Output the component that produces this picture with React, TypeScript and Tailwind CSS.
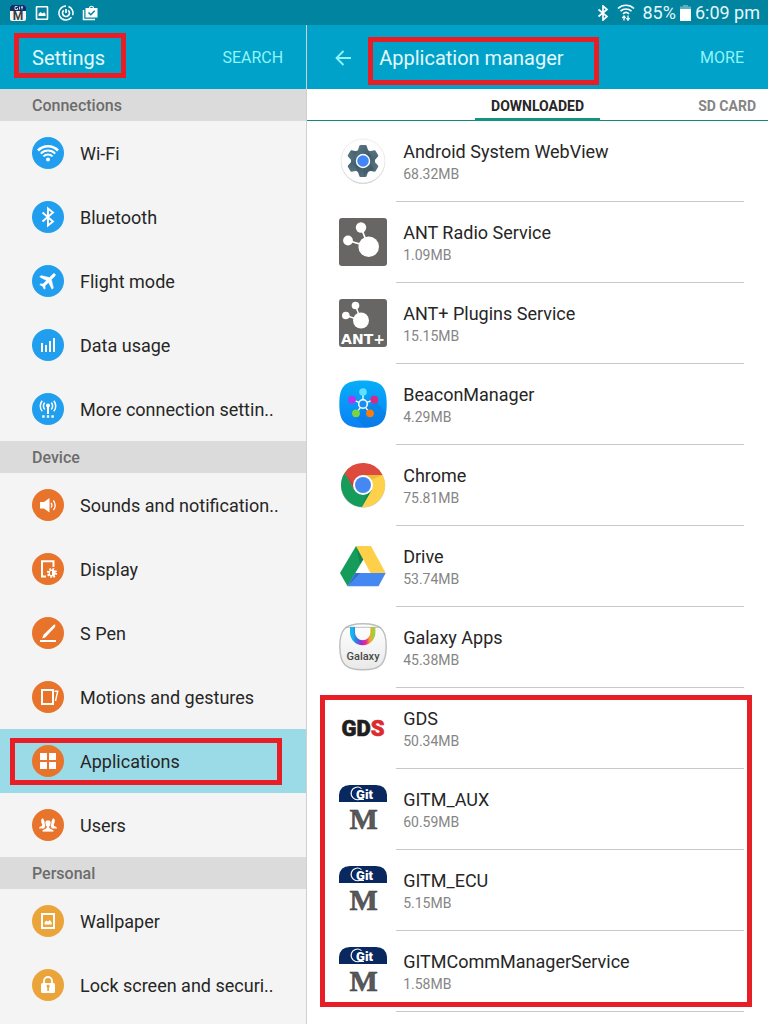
import type { ReactNode } from 'react'

const LOGO_FONT = 'Roboto, "Liberation Sans", sans-serif'

const CONNECTIONS = [
  {
    label: 'Wi-Fi',
    icon: (
      <g fill="none" stroke="#fff" strokeWidth="2">
        <path d="M6 13.5a14 14 0 0 1 20 0" strokeWidth="2.6" />
        <path d="M8.8 16.6a10.2 10.2 0 0 1 14.4 0" />
        <path d="M11.4 19.4a6.5 6.5 0 0 1 9.2 0" />
        <circle cx="16" cy="22.6" r="2" fill="#fff" stroke="none" />
      </g>
    ),
  },
  {
    label: 'Bluetooth',
    icon: <path d="M10.5 11.5 21 20.5 16 24.5V7.5L21 11.5 10.5 20.5" fill="none" stroke="#fff" strokeWidth="1.9" />,
  },
  {
    label: 'Flight mode',
    icon: (
      <path
        transform="translate(16.5 15.5) rotate(45) scale(.92) translate(-11.5 -12)"
        d="M21 16v-2l-8-5V3.5c0-.83-.67-1.5-1.5-1.5S10 2.67 10 3.5V9l-8 5v2l8-2.5V19l-2 1.5V22l3.5-1 3.5 1v-1.5L13 19v-5.500l8 2.500z"
        fill="#fff"
        stroke="#fff"
        strokeWidth=".5"
      />
    ),
  },
  {
    label: 'Data usage',
    icon: <path d="M10 14v9M14 16v7M18 12v11M22 9v14" fill="none" stroke="#fff" strokeWidth="2" />,
  },
  {
    label: 'More connection settin..',
    icon: (
      <g fill="none" stroke="#fff" strokeWidth="1.5">
        <path d="M16 13v8" strokeWidth="2" />
        <path d="M12.8 9.6a4.8 4.8 0 0 0 0 6.8M19.2 9.6a4.8 4.8 0 0 1 0 6.8M10.2 7.8a8 8 0 0 0 0 10.4M21.8 7.8a8 8 0 0 1 0 10.4" />
        <circle cx="16" cy="12.5" r="2" fill="#fff" stroke="none" />
        <path d="M10.2 23.5h2.4M14.8 23.5h2.4M19.4 23.5h2.4" strokeWidth="2.4" />
      </g>
    ),
  },
]

const DEVICE = [
  {
    label: 'Sounds and notification..',
    icon: (
      <>
        <path d="M8 13h4l5.5-4v14.5L12 19.5H8z" fill="#fff" />
        <path d="M19 14a3.5 3.5 0 0 1 0 4.5M21.3 11.5a7 7 0 0 1 0 9.5" fill="none" stroke="#fff" strokeWidth="1.3" />
      </>
    ),
  },
  {
    label: 'Display',
    icon: (
      <>
        <path d="M21.5 14V8.200H10v15.300h4" fill="none" stroke="#fff" strokeWidth="2" />
        <circle cx="20" cy="20" r="3.800" fill="none" stroke="#fff" strokeWidth="2.600" strokeDasharray="1.6 1.38" />
        <circle cx="20" cy="20" r="2.900" fill="none" stroke="#fff" strokeWidth="1.200" />
        <path d="M20 17.200a2.800 2.800 0 0 1 0 5.600z" fill="#fff" />
      </>
    ),
  },
  {
    label: 'S Pen',
    icon: (
      <>
        <path d="M10.200 21.600l1.300-3.900L21.800 7.700l1.500-.3-.2 2.600L13.200 20.400z" fill="#fff" />
        <path d="M8 24h16" stroke="#fff" strokeWidth="2" />
      </>
    ),
  },
  {
    label: 'Motions and gestures',
    icon: (
      <g fill="none" stroke="#fff">
        <rect x="10" y="9" width="11" height="14" strokeWidth="2" />
        <path d="M22.5 10.200h3.200L23.5 20" strokeWidth="1.400" />
      </g>
    ),
  },
  {
    label: 'Applications',
    active: true,
    icon: <path d="M8 8h7v7H8zM17 8h7v7h-7zM8 17h7v7H8zM17 17h7v7h-7z" fill="#fff" />,
  },
  {
    label: 'Users',
    icon: (
      <g fill="#fff">
        <path d="M11 9.300c-2.300.3-2.200 4-.9 5.800.3.900.1 1.700-.8 2.100-1.200.5-2.300.8-2.300 2.400h5.200l1.800-4z" />
        <path d="M21 9.300c2.300.3 2.200 4 .9 5.800-.3.900-.1 1.700.8 2.100 1.200.5 2.300.8 2.300 2.400h-5.200l-1.800-4z" />
        <path
          d="M16 11c-2.600 0-3.300 1.900-2.900 4 .2 1.200.7 2 1.300 2.600.2 1.300-.3 1.700-1.500 2.200-1.400.6-2.900 1-2.900 3.200h12c0-2.200-1.500-2.600-2.900-3.200-1.200-.5-1.700-.9-1.500-2.200.6-.6 1.100-1.400 1.300-2.600.4-2.100-.3-4-2.900-4z"
          stroke="#e8742c"
          strokeWidth=".8"
        />
      </g>
    ),
  },
]

const PERSONAL = [
  {
    label: 'Wallpaper',
    icon: (
      <>
        <rect x="10" y="9" width="12" height="14" fill="none" stroke="#fff" strokeWidth="2" />
        <path d="M12.500 19.500v-2l1.800-2 1.700 1.200 1.800-1.600 1.900 2.400v2z" fill="#fff" />
      </>
    ),
  },
  {
    label: 'Lock screen and securi..',
    icon: (
      <>
        <path d="M12 15v-3a4 4 0 0 1 8 0v3" fill="none" stroke="#fff" strokeWidth="1.800" />
        <rect x="9" y="14" width="14" height="10" rx="1.500" fill="#fff" />
        <path d="M14.500 17.500a1.600 1.600 0 1 1 2.400 1.200V22h-1.600v-3.300z" fill="#eaa43a" />
      </>
    ),
  },
]

const GROUPS: { title: string; color: string; items: { label: string; icon: ReactNode; active?: boolean }[] }[] = [
  { title: 'Connections', color: '#219fee', items: CONNECTIONS },
  { title: 'Device', color: '#e8742c', items: DEVICE },
  { title: 'Personal', color: '#eaa43a', items: PERSONAL },
]

function WebViewIcon() {
  return (
    <>
      <circle cx="24" cy="24.8" r="22" fill="#c4c4c4" />
      <circle cx="24" cy="24" r="22" fill="#fefefe" stroke="#e2e2e2" strokeWidth=".6" />
      <g fill="url(#gear)">
        <circle cx="24" cy="24" r="12" />
        {[0, 60, 120, 180, 240, 300].map((deg) => (
          <path key={deg} transform={`rotate(${deg} 24 24)`} d="M18.500 14.500 20.400 8.800q.3-.8 1.200-.8h4.800q.9 0 1.200.8l1.900 5.700z" />
        ))}
      </g>
      <path d="M24 31l8-4 3 5-7 4-3 4z" fill="#2f4a55" opacity=".35" />
      <circle cx="24" cy="24" r="7.200" fill="#fff" />
      <circle cx="24" cy="24" r="5.800" fill="#4285f4" />
      <defs>
        <linearGradient id="gear" x1="8" y1="8" x2="40" y2="40" gradientUnits="userSpaceOnUse">
          <stop stopColor="#6a8793" />
          <stop offset=".5" stopColor="#3f5a66" />
          <stop offset="1" stopColor="#6d8a96" />
        </linearGradient>
      </defs>
    </>
  )
}

function AntIcon() {
  return (
    <>
      <rect width="48" height="48" rx="3" fill="#686664" />
      <path d="M22 9.500 29.500 28.500 9 22.500" fill="none" stroke="#fff" strokeWidth="1.800" />
      <circle cx="29.700" cy="28.700" r="10.300" fill="#fff" />
      <circle cx="22" cy="9.500" r="5.200" fill="#fff" />
      <circle cx="9" cy="22.500" r="4.900" fill="#fff" />
    </>
  )
}

function AntPlusIcon() {
  return (
    <>
      <rect width="48" height="48" rx="3" fill="#686664" />
      <path d="M16.500 6.500 22 21.500 7 16.500" fill="none" stroke="#fff" strokeWidth="1.500" />
      <circle cx="22" cy="21.500" r="8" fill="#fff" />
      <circle cx="16.500" cy="6.500" r="3.800" fill="#fff" />
      <circle cx="6.800" cy="16.500" r="3.800" fill="#fff" />
      <text x="24" y="45" textAnchor="middle" fontFamily='"DejaVu Sans", sans-serif' fontSize="14" fontWeight="700" fill="#fff">
        ANT+
      </text>
    </>
  )
}

function BeaconIcon() {
  return (
    <>
      <defs>
        <linearGradient id="beacon" x1="0" y1="0" x2="0" y2="1">
          <stop stopColor="#06aef8" />
          <stop offset="1" stopColor="#0b80f4" />
        </linearGradient>
      </defs>
      <path d="M24 .5C6 .5.3 6 .3 24S6 47.700 24 47.700 47.700 42 47.700 24 42 .5 24 .5z" fill="url(#beacon)" />
      <path d="M15 36 26 47.500c12-.4 19-4 21-14L37 21z" fill="#086fd6" opacity=".35" />
      <path d="M24 12v8M35 19.700l-7 2.700M31 33.300l-4.500-6M17 33.300l4.500-6M13 19.700l7 2.700" stroke="#fff" strokeWidth="1.300" />
      <circle cx="24" cy="24" r="4.300" fill="#1a8df0" stroke="#fff" strokeWidth="1.500" />
      <circle cx="24" cy="12" r="3.800" fill="#5fe2ff" />
      <circle cx="35.300" cy="19.700" r="3.900" fill="#d62a86" />
      <circle cx="31" cy="33.300" r="3.900" fill="#fb7b0c" />
      <circle cx="17" cy="33.300" r="3.900" fill="#7ed33f" />
      <circle cx="13" cy="19.700" r="3.900" fill="#b535ea" />
    </>
  )
}

function ChromeIcon() {
  return (
    <>
      <circle cx="24" cy="24.500" r="22.200" fill="#c9c9c9" />
      <path d="M5.540 12.030A22 22 0 0 1 43.600 14H24L15.340 29z" fill="#dc4b3e" />
      <path d="M43.600 14A22 22 0 0 1 22.860 45.970L32.660 29 24 14z" fill="#fed14b" />
      <path d="M22.860 45.970A22 22 0 0 1 5.540 12.030L15.340 29H32.660z" fill="#169c5a" />
      <path d="M24 14h19.600L33 18.500z" fill="#d9a52b" opacity=".5" />
      <path d="M32.660 29 22.860 45.970 28 33z" fill="#0d7a43" opacity=".5" />
      <path d="M5.540 12.030 15.340 29 14 22z" fill="#9c3128" opacity=".4" />
      <circle cx="24" cy="24" r="10" fill="#fff" />
      <circle cx="24" cy="24" r="8" fill="#4688f2" />
    </>
  )
}

function DriveIcon() {
  return (
    <>
      <path d="M17 4 24.300 17.500 8.500 44.300 1 31z" fill="#169c5a" />
      <path d="M17 4h15l14.700 27H31.500z" fill="#fecf48" />
      <path d="M16.300 31h30.400L39.500 44.300h-31z" fill="#4688f2" />
      <path d="M17 4 24.300 17.500 21 22z" fill="#0c6e3c" opacity=".5" />
      <path d="M16.300 31h5L8.500 44.300z" fill="#2a5bb5" opacity=".6" />
    </>
  )
}

function GalaxyIcon() {
  return (
    <>
      <defs>
        <linearGradient id="galaxyBag" x1="0" y1="0" x2="0" y2="1">
          <stop stopColor="#fff" />
          <stop offset="1" stopColor="#e9e9e9" />
        </linearGradient>
        <linearGradient id="galaxyHandle">
          <stop stopColor="#16b5ee" />
          <stop offset=".22" stopColor="#3a72dd" />
          <stop offset=".45" stopColor="#a32bd0" />
          <stop offset=".68" stopColor="#ee2f87" />
          <stop offset=".85" stopColor="#f8a42c" />
          <stop offset="1" stopColor="#a5cd39" />
        </linearGradient>
      </defs>
      <path d="M24 .8C6.500.8.8 6 .8 23.500S6.500 46.700 24 46.700 47.200 41 47.200 23.500 41.500.8 24 .8z" fill="url(#galaxyBag)" stroke="#bdbdbd" strokeWidth="1.400" />
      <path d="M6 4.300h36" stroke="#b0b0b0" strokeWidth=".8" />
      <path d="M13.500 4v5.500a10.200 10.200 0 0 0 20.400 0V4" fill="none" stroke="url(#galaxyHandle)" strokeWidth="5" />
      <text x="24" y="37" textAnchor="middle" fontFamily={LOGO_FONT} fontSize="11" fontWeight="500" fill="#484848">
        Galaxy
      </text>
    </>
  )
}

function GdsIcon() {
  return (
    <text x="24" y="32" textAnchor="middle" fontFamily={LOGO_FONT} fontSize="22" fontWeight="900" fill="#1f1f1f" stroke="#1f1f1f" strokeWidth=".6">
      GD
      <tspan fill="#dd2a2c" stroke="#dd2a2c">
        S
      </tspan>
    </text>
  )
}

function GitmIcon() {
  return (
    <>
      <path d="M0 17V10Q1 0 11 0H37Q47 0 48 10V17z" fill="#08285f" />
      <path d="M22.500 3.600A6.300 6.300 0 1 0 20 14.500h5" fill="none" stroke="#fff" strokeWidth="1.100" />
      <text x="25.500" y="13.500" textAnchor="middle" fontFamily={LOGO_FONT} fontSize="13" fontWeight="900" fill="#fff">
        Git
      </text>
      <text x="24.700" y="43.500" textAnchor="middle" fontFamily='"Liberation Serif", serif' fontSize="30" fontWeight="700" fill="#58595b" stroke="#3a3a3c" strokeWidth=".5">
        M
      </text>
    </>
  )
}

type App = { name: string; size: string; icon: ReactNode }

const APPS: App[] = [
  { name: 'Android System WebView', size: '68.32MB', icon: <WebViewIcon /> },
  { name: 'ANT Radio Service', size: '1.09MB', icon: <AntIcon /> },
  { name: 'ANT+ Plugins Service', size: '15.15MB', icon: <AntPlusIcon /> },
  { name: 'BeaconManager', size: '4.29MB', icon: <BeaconIcon /> },
  { name: 'Chrome', size: '75.81MB', icon: <ChromeIcon /> },
  { name: 'Drive', size: '53.74MB', icon: <DriveIcon /> },
  { name: 'Galaxy Apps', size: '45.38MB', icon: <GalaxyIcon /> },
]

const GIT_APPS: App[] = [
  { name: 'GDS', size: '50.34MB', icon: <GdsIcon /> },
  { name: 'GITM_AUX', size: '60.59MB', icon: <GitmIcon /> },
  { name: 'GITM_ECU', size: '5.15MB', icon: <GitmIcon /> },
  { name: 'GITMCommManagerService', size: '1.58MB', icon: <GitmIcon /> },
]

function StatusBar() {
  return (
    <div className="flex h-[25px] items-center bg-[#00849f] pl-2.5 pr-2 text-lg leading-6 text-[#e4f7fa]">
      <div className="flex items-center gap-2">
        <svg className="size-4 overflow-visible" viewBox="0 0 16 16">
          <rect width="16" height="16" rx="2" fill="#f4f4f4" />
          <path d="M0 6V2q0-2 2-2h12q2 0 2 2v4z" fill="#10306a" />
          <path d="M7.500 1.500H5v3h2.500V3M9.500 1.500v3M12 1v3.500M11 2.200h2" fill="none" stroke="#fff" strokeWidth=".8" />
          <text x="8" y="15" textAnchor="middle" fontFamily={LOGO_FONT} fontSize="12" fontWeight="700" fill="#3d3d3f">
            M
          </text>
        </svg>
        <svg className="size-4" viewBox="0 0 16 16">
          <rect x="2.500" y="1.800" width="11" height="12.400" rx=".5" fill="none" stroke="#fff" strokeWidth="1.600" />
          <path d="M4.500 11V9l2-2 2 1.500 1.500-1.200L11.500 9v2z" fill="#fff" />
        </svg>
        <svg className="size-4" viewBox="0 0 16 16" fill="none" stroke="#fff" strokeWidth="1.500">
          <path d="M8 1a7 7 0 1 0 5.500 11.300M14.600 10.300A7 7 0 0 0 10.500 1.500" />
          <path d="M5.800 5.300a3.500 3.500 0 1 0 4.400 0M8 4v4" strokeWidth="1.700" />
        </svg>
        <svg className="size-4" viewBox="0 0 16 16">
          <path d="M1.500 5v9.500H13" fill="none" stroke="#fff" strokeWidth="1.500" />
          <path d="M3.500 3H7q0-2.300 2.500-2.300T12 3h3.500v9.500h-12z" fill="#fff" />
          <path d="M8.200 3q0-1.200 1.300-1.200T10.800 3z" fill="#00849f" />
          <path d="M6.500 7.500 8.800 9.800 12.700 5.800" fill="none" stroke="#00849f" strokeWidth="1.500" />
        </svg>
      </div>
      <div className="ml-auto flex items-center">
        <svg className="mr-2 h-4 w-3" viewBox="0 0 12 16">
          <path d="M1.500 4.500 10 11.500 6 15V1L10 4.500 1.500 11.500" fill="none" stroke="#fff" strokeWidth="1.700" />
        </svg>
        <svg className="mr-2 h-[17px] w-[18px]" viewBox="0 0 18 17" fill="none" stroke="#fff" strokeWidth="1.700">
          <path d="M1 4.500a11.500 11.500 0 0 1 16 0M3.500 7.200a8 8 0 0 1 11 0M6 9.800a4.500 4.500 0 0 1 6 0" />
          <path d="M7 16.500V12M5.300 14 7 12l1.500 2M11 11.500V16M9.500 14.200l1.500 2 1.700-2" strokeWidth="1.300" />
        </svg>
        <span>85%</span>
        <svg className="mx-1 h-4 w-[11px]" viewBox="0 0 11 16">
          <path d="M3 0h5v1.500h3V4H0V1.500h3z" fill="#5fb0c0" />
          <path d="M0 4h11v12H0z" fill="#fff" />
        </svg>
        <span>6:09 pm</span>
      </div>
    </div>
  )
}

function Sidebar() {
  return (
    <aside className="flex w-2/5 shrink-0 flex-col border-r border-[#d0d0d0] bg-[#f4f4f4]">
      <header className="relative flex h-16 items-center justify-between bg-[#00a2ca] pl-8 pr-[23px] pt-0.5">
        <h1 className="text-xl text-[#e4f9fc]">Settings</h1>
        <button className="text-base text-[#8ff5f8]">SEARCH</button>
        <div className="pointer-events-none absolute left-3.5 top-2 h-[45px] w-28 border-5 border-[#e81e26]" />
      </header>
      <nav>
        {GROUPS.map((group) => (
          <section key={group.title}>
            <h2 className="flex h-8 items-center bg-[#dbdbdb] pl-8 pt-0.5 text-base font-medium text-[#6c6c6c]">{group.title}</h2>
            <ul>
              {group.items.map((item) => (
                <li key={item.label} className={item.active ? 'relative bg-[#9adbe7]' : ''}>
                  <a href="#" className="flex h-16 items-center gap-4 pl-8 text-lg text-[#262626]">
                    <svg className="size-8 shrink-0" viewBox="0 0 32 32">
                      <circle cx="16" cy="16" r="16" fill={group.color} />
                      {item.icon}
                    </svg>
                    <span className="truncate pt-0.5">{item.label}</span>
                  </a>
                  {item.active && (
                    <div className="pointer-events-none absolute bottom-2 left-2.5 right-6 top-[9px] border-5 border-[#e81e26]" />
                  )}
                </li>
              ))}
            </ul>
          </section>
        ))}
      </nav>
    </aside>
  )
}

function AppRow({ app }: { app: App }) {
  return (
    <li className="flex h-[81px] pl-8 pr-6">
      <svg className="mt-4 size-12 shrink-0 overflow-visible" viewBox="0 0 48 48">
        {app.icon}
      </svg>
      <div className="ml-[9px] flex min-w-0 flex-1 flex-col justify-center border-b border-[#c8c8c8] pl-[7px] pt-0.5">
        <span className="truncate text-lg leading-6 text-[#262626]">{app.name}</span>
        <span className="text-sm leading-5 text-[#858585]">{app.size}</span>
      </div>
    </li>
  )
}

function AppManager() {
  return (
    <main className="min-w-0 flex-1 bg-white">
      <header className="flex h-16 items-center bg-[#00a2ca] pl-7 pr-6 pt-0.5">
        <button aria-label="Back" className="mr-7">
          <svg className="size-4" viewBox="0 0 16 16" fill="none" stroke="#8ff5f8" strokeWidth="1.800">
            <path d="M8.500 1 1.500 8l7 7M1.500 8H16" />
          </svg>
        </button>
        <div className="relative">
          <h2 className="text-xl text-[#e4f9fc]">Application manager</h2>
          <div className="pointer-events-none absolute -bottom-[13px] -left-[11px] -right-[35px] -top-[7px] border-5 border-[#e81e26]" />
        </div>
        <button className="ml-auto text-base text-[#8ff5f8]">MORE</button>
      </header>
      <div className="grid h-8 grid-cols-[1fr_auto_1fr] border-b border-[#12877f] text-sm font-bold">
        <button className="col-start-2 -mb-px border-b-3 border-[#12947f] px-4 pt-1 text-[#262626]">DOWNLOADED</button>
        <button className="justify-self-end pr-3 pt-0.5 text-[#858585]">SD CARD</button>
      </div>
      <ul>
        {APPS.map((app) => (
          <AppRow key={app.name} app={app} />
        ))}
      </ul>
      <div className="relative">
        <ul>
          {GIT_APPS.map((app) => (
            <AppRow key={app.name} app={app} />
          ))}
        </ul>
        <div className="pointer-events-none absolute bottom-[5px] left-[13px] right-4 top-[7px] border-5 border-[#e81e26]" />
      </div>
    </main>
  )
}

export default function App() {
  return (
    <div className="flex min-h-screen flex-col font-[Roboto,'Liberation_Sans',sans-serif]">
      <StatusBar />
      <div className="flex flex-1">
        <Sidebar />
        <AppManager />
      </div>
    </div>
  )
}
